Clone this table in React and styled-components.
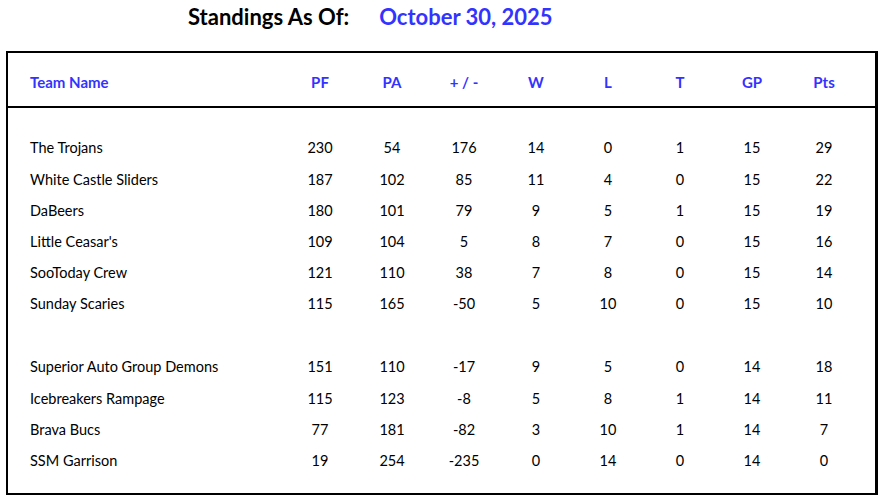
import React from "react";
import styled, { createGlobalStyle } from "styled-components";

const GlobalStyle = createGlobalStyle`
  body {
    margin: 0;
    background: #ffffff;
    font-family: Lato, "Open Sans", sans-serif;
  }
`;

const columns = ["PF", "PA", "+ / -", "W", "L", "T", "GP", "Pts"];

const groups = [
  [
    ["The Trojans", 230, 54, 176, 14, 0, 1, 15, 29],
    ["White Castle Sliders", 187, 102, 85, 11, 4, 0, 15, 22],
    ["DaBeers", 180, 101, 79, 9, 5, 1, 15, 19],
    ["Little Ceasar's", 109, 104, 5, 8, 7, 0, 15, 16],
    ["SooToday Crew", 121, 110, 38, 7, 8, 0, 15, 14],
    ["Sunday Scaries", 115, 165, -50, 5, 10, 0, 15, 10],
  ],
  [
    ["Superior Auto Group Demons", 151, 110, -17, 9, 5, 0, 14, 18],
    ["Icebreakers Rampage", 115, 123, -8, 5, 8, 1, 14, 11],
    ["Brava Bucs", 77, 181, -82, 3, 10, 1, 14, 7],
    ["SSM Garrison", 19, 254, -235, 0, 14, 0, 14, 0],
  ],
];

const App = () => {
  return (
    <>
      <GlobalStyle />
      <Page>
        <Title>
          <TitleLabel>Standings As Of:</TitleLabel>
          <TitleDate>October 30, 2025</TitleDate>
        </Title>
        <Board>
          <HeadRow>
            <HeadCell $left>Team Name</HeadCell>
            {columns.map((c) => (
              <HeadCell key={c}>{c}</HeadCell>
            ))}
          </HeadRow>
          <Body>
            {groups.map((g, gi) => (
              <Group key={gi}>
                {g.map((row) => (
                  <Row key={row[0]}>
                    <Cell $left>{row[0]}</Cell>
                    {row.slice(1).map((v, i) => (
                      <Cell key={i}>{v}</Cell>
                    ))}
                  </Row>
                ))}
              </Group>
            ))}
          </Body>
        </Board>
      </Page>
    </>
  );
};

const Page = styled.div`
  width: 881px;
  padding: 0 3px 0 6px;
  box-sizing: border-box;
`;

const Title = styled.div`
  display: flex;
  align-items: center;
  gap: 30px;
  height: 33px;
  padding-left: 182px;
  font-size: 22px;
  font-weight: 700;
`;

const TitleLabel = styled.span`
  color: #000000;
`;

const TitleDate = styled.span`
  color: #3333ff;
`;

const Board = styled.div`
  margin-top: 18px;
  border: 2px solid #000000;
  border-right-width: 3px;
  height: 444px;
  box-sizing: border-box;
`;

const HeadRow = styled.div`
  display: grid;
  grid-template-columns: 1fr repeat(8, 72px);
  align-items: center;
  height: 55px;
  padding: 5px 15px 0 22px;
  box-sizing: border-box;
  border-bottom: 2px solid #000000;
`;

const HeadCell = styled.div`
  color: #3333ff;
  font-weight: 700;
  font-size: 15px;
  text-align: ${(p) => (p.$left ? "left" : "center")};
`;

const Body = styled.div`
  display: flex;
  flex-direction: column;
  gap: 31.8px;
  padding: 24.4px 15px 0 22px;
`;

const Group = styled.div`
  display: flex;
  flex-direction: column;
`;

const Row = styled.div`
  display: grid;
  grid-template-columns: 1fr repeat(8, 72px);
  align-items: center;
  height: 31.2px;
`;

const Cell = styled.div`
  color: #000000;
  font-size: 14.5px;
  text-align: ${(p) => (p.$left ? "left" : "center")};
`;

export default App;
